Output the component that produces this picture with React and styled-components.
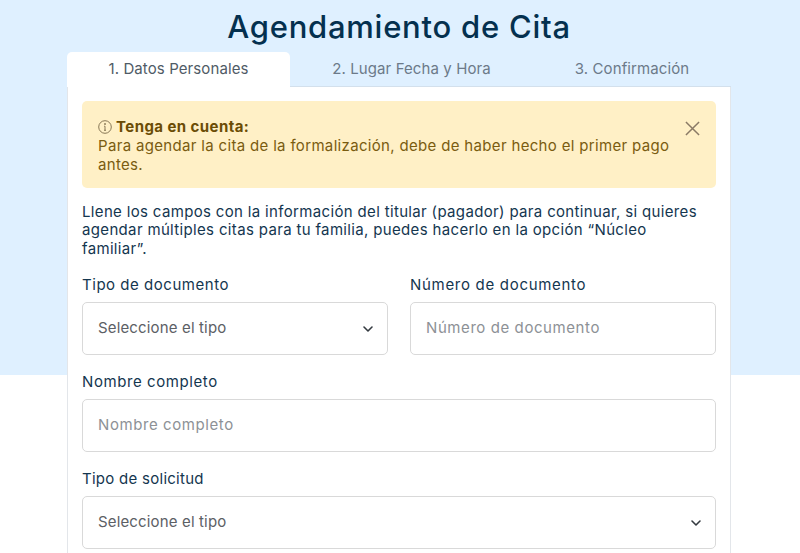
import React from "react";
import styled, { createGlobalStyle } from "styled-components";

const Global = createGlobalStyle`
  html, body { margin: 0; padding: 0; }
  body {
    height: 553px;
    overflow: hidden;
    background: linear-gradient(#dff0ff 375px, #ffffff 375px);
    font-family: Inter, "Liberation Sans", sans-serif;
  }
`;

const Page = styled.div`
  width: 664px;
  margin: 0 auto 0 67px;
`;

const Title = styled.h1`
  margin: 0;
  height: 52px;
  padding-top: 7px;
  box-sizing: border-box;
  font-size: 31px;
  line-height: 40px;
  font-weight: 500;
  letter-spacing: 0.75px;
  text-align: center;
  color: #04304f;
`;

const Tabs = styled.div`
  display: grid;
  grid-template-columns: 223px 243px 198px;
  height: 35px;
`;

const Tab = styled.div`
  display: flex;
  align-items: center;
  justify-content: center;
  padding-bottom: 2px;
  font-size: 15px;
  letter-spacing: 0.1px;
  color: ${(p) => (p.$active ? "#4f5b66" : "#6c7a89")};
  background: ${(p) => (p.$active ? "#fff" : "transparent")};
  border-radius: 5px 5px 0 0;
  border-bottom: ${(p) => (p.$active ? "none" : "1px solid #d3e0ec")};
  box-sizing: border-box;
`;

const Panel = styled.div`
  background: #fff;
  border-right: 1px solid #e3e6ea;
  border-left: 1px solid #e3e6ea;
  padding: 14px 14px 0;
  height: 466px;
  box-sizing: border-box;
`;

const Alert = styled.div`
  position: relative;
  background: #fff0c6;
  border-radius: 5px;
  height: 87px;
  padding: 16px 16px 0;
  box-sizing: border-box;
  font-size: 15px;
  line-height: 19px;
  letter-spacing: 0.33px;
  color: #7a5c10;
`;

const AlertHead = styled.div`
  display: flex;
  align-items: center;
  gap: 4px;
  font-weight: 700;
  letter-spacing: 0.43px;
  color: #6b4c05;
`;

const Close = styled.svg`
  position: absolute;
  right: 16px;
  top: 20px;
  width: 15px;
  height: 15px;
  stroke: #8a7a66;
  stroke-width: 1.6;
  fill: none;
`;

const Intro = styled.p`
  margin: 15px 0 0;
  font-size: 15px;
  line-height: 18.4px;
  letter-spacing: 0.34px;
  color: #14364f;
`;

const Row = styled.div`
  display: grid;
  grid-template-columns: 306px 306px;
  column-gap: 22px;
  margin-top: ${(p) => p.$mt}px;
`;

const Field = styled.div`
  grid-column: ${(p) => (p.$full ? "1 / -1" : "auto")};
`;

const Label = styled.div`
  font-size: 15px;
  line-height: 18px;
  letter-spacing: ${(p) => p.$ls ?? 0.58}px;
  color: #14364f;
  margin-bottom: 8px;
`;

const Control = styled.div`
  display: flex;
  align-items: center;
  justify-content: space-between;
  height: 53px;
  box-sizing: border-box;
  padding: 0 13px 2px 15px;
  border: 1px solid #d9d9d9;
  border-radius: 5px;
  font-size: 15px;
  letter-spacing: ${(p) => (p.$placeholder ? "0.58px" : "0.15px")};
  background: #fff;
  color: ${(p) => (p.$placeholder ? "#8d9196" : "#5c6065")};
`;

const Chevron = styled.svg`
  width: 12px;
  height: 12px;
  stroke: #343a40;
  stroke-width: 1.6;
  fill: none;
  stroke-linecap: round;
  stroke-linejoin: round;
  margin-top: 2px;
`;

const InfoIcon = () => (
  <svg width="14" height="14" viewBox="0 0 14 14" fill="none" stroke="#7a6a4a" strokeWidth="0.9">
    <circle cx="7" cy="7" r="6.3" />
    <path d="M7 6.2v4M6 10.3h2M6.2 6.2H7" />
    <circle cx="7" cy="4" r="0.5" fill="#7a6a4a" />
  </svg>
);

const Caret = () => (
  <Chevron viewBox="0 0 12 12">
    <path d="M2 4l4 4 4-4" />
  </Chevron>
);

export default function App() {
  return (
    <>
      <Global />
      <Page>
        <Title>Agendamiento de Cita</Title>
        <Tabs>
          <Tab $active>1. Datos Personales</Tab>
          <Tab>2. Lugar Fecha y Hora</Tab>
          <Tab>3. Confirmación</Tab>
        </Tabs>
        <Panel>
          <Alert>
            <AlertHead>
              <InfoIcon />
              Tenga en cuenta:
            </AlertHead>
            Para agendar la cita de la formalización, debe de haber hecho el primer pago
            <br />
            antes.
            <Close viewBox="0 0 16 16">
              <path d="M1 1l14 14M15 1L1 15" />
            </Close>
          </Alert>
          <Intro>
            Llene los campos con la información del titular (pagador) para continuar, si quieres
            <br />
            agendar múltiples citas para tu familia, puedes hacerlo en la opción “Núcleo
            <br />
            familiar”.
          </Intro>
          <Row $mt={18}>
            <Field>
              <Label $ls={0.53}>Tipo de documento</Label>
              <Control>
                Seleccione el tipo
                <Caret />
              </Control>
            </Field>
            <Field>
              <Label $ls={0.7}>Número de documento</Label>
              <Control $placeholder>Número de documento</Control>
            </Field>
          </Row>
          <Row $mt={18}>
            <Field $full>
              <Label>Nombre completo</Label>
              <Control $placeholder>Nombre completo</Control>
            </Field>
          </Row>
          <Row $mt={18}>
            <Field $full>
              <Label $ls={0.27}>Tipo de solicitud</Label>
              <Control>
                Seleccione el tipo
                <Caret />
              </Control>
            </Field>
          </Row>
        </Panel>
      </Page>
    </>
  );
}
